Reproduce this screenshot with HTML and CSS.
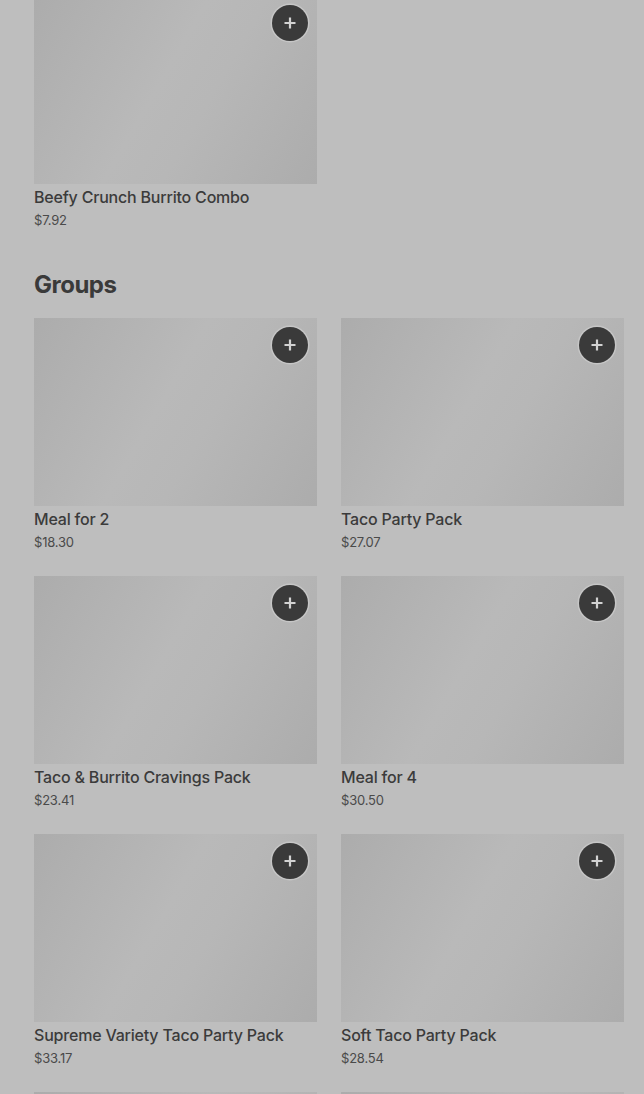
FILE: index.html
```html
<!DOCTYPE html>
<html>

<head>
    <title>Menu</title>
    <meta charset="utf-8">
    <meta name="viewport" content="width=device-width, initial-scale=1.0">
    <link rel="stylesheet" href="styles.css">
</head>

<body>

    <main class="menu">

        <section class="sektion sektion-top">
            <div class="liste">
                <article class="ret">
                    <div class="billede"><button class="tilfoej" aria-label="Add">
                        <svg width="14" height="14" viewBox="0 0 14 14"><path d="M7 1.5v11M1.5 7h11" stroke="currentColor" stroke-width="2.2"/></svg>
                    </button></div>
                    <h3>Beefy Crunch Burrito Combo</h3>
                    <p>$7.92</p>
                </article>
            </div>
        </section>

        <section class="sektion">
            <h2>Groups</h2>
            <div class="liste">
                <article class="ret">
                    <div class="billede"><button class="tilfoej" aria-label="Add">
                        <svg width="14" height="14" viewBox="0 0 14 14"><path d="M7 1.5v11M1.5 7h11" stroke="currentColor" stroke-width="2.2"/></svg>
                    </button></div>
                    <h3>Meal for 2</h3>
                    <p>$18.30</p>
                </article>
                <article class="ret">
                    <div class="billede"><button class="tilfoej" aria-label="Add">
                        <svg width="14" height="14" viewBox="0 0 14 14"><path d="M7 1.5v11M1.5 7h11" stroke="currentColor" stroke-width="2.2"/></svg>
                    </button></div>
                    <h3>Taco Party Pack</h3>
                    <p>$27.07</p>
                </article>
                <article class="ret">
                    <div class="billede"><button class="tilfoej" aria-label="Add">
                        <svg width="14" height="14" viewBox="0 0 14 14"><path d="M7 1.5v11M1.5 7h11" stroke="currentColor" stroke-width="2.2"/></svg>
                    </button></div>
                    <h3>Taco &amp; Burrito Cravings Pack</h3>
                    <p>$23.41</p>
                </article>
                <article class="ret">
                    <div class="billede"><button class="tilfoej" aria-label="Add">
                        <svg width="14" height="14" viewBox="0 0 14 14"><path d="M7 1.5v11M1.5 7h11" stroke="currentColor" stroke-width="2.2"/></svg>
                    </button></div>
                    <h3>Meal for 4</h3>
                    <p>$30.50</p>
                </article>
                <article class="ret">
                    <div class="billede"><button class="tilfoej" aria-label="Add">
                        <svg width="14" height="14" viewBox="0 0 14 14"><path d="M7 1.5v11M1.5 7h11" stroke="currentColor" stroke-width="2.2"/></svg>
                    </button></div>
                    <h3>Supreme Variety Taco Party Pack</h3>
                    <p>$33.17</p>
                </article>
                <article class="ret">
                    <div class="billede"><button class="tilfoej" aria-label="Add">
                        <svg width="14" height="14" viewBox="0 0 14 14"><path d="M7 1.5v11M1.5 7h11" stroke="currentColor" stroke-width="2.2"/></svg>
                    </button></div>
                    <h3>Soft Taco Party Pack</h3>
                    <p>$28.54</p>
                </article>
                <article class="ret">
                    <div class="billede"></div>
                </article>
                <article class="ret">
                    <div class="billede"></div>
                </article>
            </div>
        </section>

    </main>

</body>

</html>
```

FILE: styles.css
```css
body {
    margin: 0;
    background-color: #bebebe;
    font-family: Inter, "Liberation Sans", sans-serif;
    color: #3b3b3b;
    overflow: hidden;
    height: 1094px;
}

.menu {
    padding: 0 20px 0 34px;
    margin-top: -4px;
}

.sektion-top {
    margin-bottom: 39px;
}

h2 {
    margin: 0 0 17px;
    font-size: 24px;
    line-height: 32px;
    font-weight: 700;
    letter-spacing: -0.5px;
    color: #3a3a3a;
}

.liste {
    display: grid;
    grid-template-columns: 283px 283px;
    column-gap: 24px;
    row-gap: 24px;
}

.billede {
    position: relative;
    height: 188px;
    background: linear-gradient(120deg, #acacac 0%, #b9b9b9 45%, #b7b7b7 60%, #acacac 100%);
}

.tilfoej {
    position: absolute;
    top: 9px;
    right: 9px;
    width: 36px;
    height: 36px;
    border: none;
    border-radius: 50%;
    padding: 0;
    background-color: #3a3a3a;
    color: #d2d2d2;
    box-shadow: 0 0 0 1.5px #c6c6c6;
    display: flex;
    align-items: center;
    justify-content: center;
}

.ret h3 {
    margin: 3px 0 0;
    font-size: 16px;
    line-height: 20px;
    font-weight: 500;
    letter-spacing: -0.2px;
    color: #3b3b3b;
}

.ret p {
    margin: 3px 0 0;
    font-size: 13px;
    line-height: 20px;
    letter-spacing: -0.2px;
    color: #4a4a4a;
}
```
